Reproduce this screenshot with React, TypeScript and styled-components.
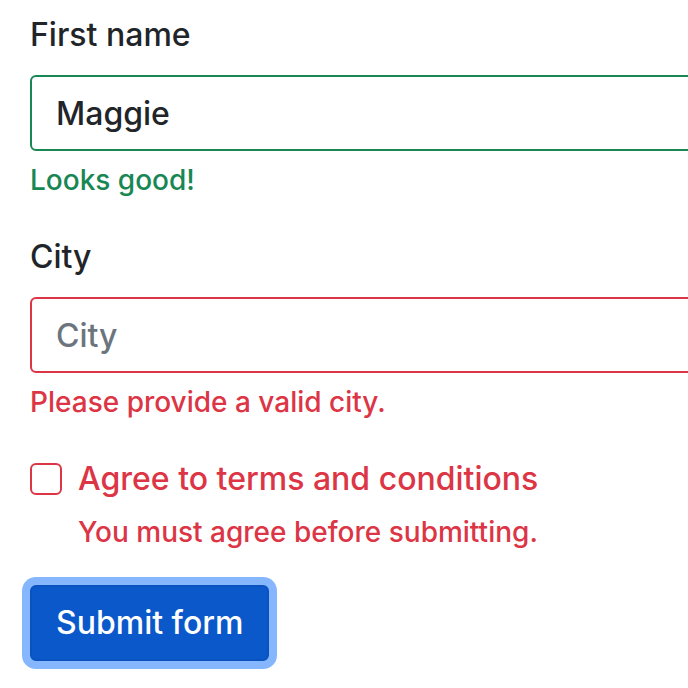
import React from 'react';
import styled, { createGlobalStyle } from 'styled-components';

const GlobalStyle = createGlobalStyle`
  html {
    overflow: hidden;
  }
  body {
    margin: 0;
    padding: 0;
    background: #fff;
    font-family: Inter, "Noto Sans", "Liberation Sans", sans-serif;
    font-weight: 500;
    color: #212529;
  }
`;

const Form = styled.form`
  display: flex;
  flex-direction: column;
  gap: 32px;
  padding: 11px 0 24px 30px;
  width: 720px;
`;

const Group = styled.div`
  display: flex;
  flex-direction: column;
`;

const Label = styled.label`
  font-size: 32px;
  line-height: 48px;
  margin-bottom: 16px;
  color: #212529;
`;

const Input = styled.input<{ $state: 'valid' | 'invalid' }>`
  box-sizing: border-box;
  width: 100%;
  height: 76px;
  padding: 12px 24px;
  font-family: inherit;
  font-weight: 500;
  font-size: 32px;
  line-height: 48px;
  color: #212529;
  background: #fff;
  border: 2px solid ${p => (p.$state === 'valid' ? '#198754' : '#dc3545')};
  border-radius: 6px;
  outline: none;

  &::placeholder {
    color: #6c757d;
  }
`;

const Feedback = styled.div<{ $state: 'valid' | 'invalid' }>`
  margin-top: 8px;
  font-size: 28px;
  line-height: 42px;
  color: ${p => (p.$state === 'valid' ? '#198754' : '#dc3545')};
`;

const Check = styled.div`
  display: grid;
  grid-template-columns: 32px auto;
  column-gap: 16px;
  align-items: start;
`;

const Box = styled.input`
  appearance: none;
  box-sizing: border-box;
  width: 32px;
  height: 32px;
  margin: 8px 0 0;
  border: 2px solid #dc3545;
  border-radius: 6px;
  background: #fff;
`;

const CheckLabel = styled.label`
  font-size: 32px;
  line-height: 48px;
  color: #dc3545;
`;

const CheckFeedback = styled(Feedback)`
  grid-column: 2;
`;

const Submit = styled.button`
  align-self: flex-start;
  font-family: inherit;
  font-weight: 500;
  font-size: 32px;
  line-height: 48px;
  padding: 12px 24px;
  color: #fff;
  background: #0a58ca;
  border: 2px solid #0a53be;
  border-radius: 6px;
  box-shadow: 0 0 0 8px #86b7fe;
  cursor: pointer;
`;

export default function App() {
  return (
    <>
      <GlobalStyle />
      <Form noValidate onSubmit={e => e.preventDefault()}>
        <Group>
          <Label htmlFor="first">First name</Label>
          <Input id="first" $state="valid" defaultValue="Maggie" />
          <Feedback $state="valid">Looks good!</Feedback>
        </Group>
        <Group>
          <Label htmlFor="city">City</Label>
          <Input id="city" $state="invalid" placeholder="City" />
          <Feedback $state="invalid">Please provide a valid city.</Feedback>
        </Group>
        <Check>
          <Box type="checkbox" id="agree" />
          <CheckLabel htmlFor="agree">Agree to terms and conditions</CheckLabel>
          <CheckFeedback $state="invalid">You must agree before submitting.</CheckFeedback>
        </Check>
        <Submit type="submit">Submit form</Submit>
      </Form>
    </>
  );
}
